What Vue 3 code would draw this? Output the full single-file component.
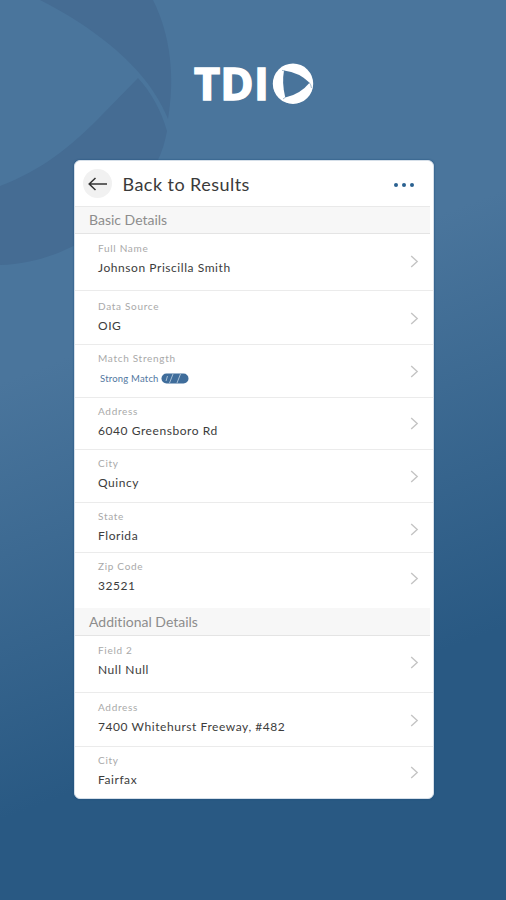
<script setup>
const basic = [
  { label: 'Full Name', value: 'Johnson Priscilla Smith', h: 57, top: 7 },
  { label: 'Data Source', value: 'OIG', h: 54, top: 7.5 },
  { label: 'Match Strength', value: 'Strong Match', h: 53, top: 6, match: true },
  { label: 'Address', value: '6040 Greensboro Rd', h: 52, top: 5.5 },
  { label: 'City', value: 'Quincy', h: 53, top: 6 },
  { label: 'State', value: 'Florida', h: 50, top: 6 },
  { label: 'Zip Code', value: '32521', h: 55, top: 5.5 },
]
const additional = [
  { label: 'Field 2', value: 'Null Null', h: 57, top: 6.5 },
  { label: 'Address', value: '7400 Whitehurst Freeway, #482', h: 54, top: 7 },
  { label: 'City', value: 'Fairfax', h: 51, top: 5.5 },
]
const sections = [
  { title: 'Basic Details', rows: basic },
  { title: 'Additional Details', rows: additional },
]
</script>

<template>
  <div class="screen">
    <svg class="backdrop" width="180" height="270" viewBox="0 0 180 270">
      <path d="M40 0C82 21 118 48 140 74C152 88 161 102 168 119C175 78 171 36 153 0Z" />
      <path d="M138 78C151 92 161 110 167 131C165 142 162 152 157 162C127 222 66 263 0 265V186C42 170 70 147 98 119Z" />
    </svg>
    <div class="logo">
      <span class="logo-text">TDI</span>
      <svg class="logo-mark" width="42" height="42" viewBox="0 0 42 42">
        <circle cx="21" cy="21.7" r="20.2" fill="#fff" />
        <path d="M12 8.6Q27 10.5 37.6 20.8Q28 32.5 13.2 35.6Q9.7 21 12 8.6Z" fill="#49749b" />
        <path d="M10 8.4L12.5 8.8M13.2 35.4L11 37M37 20.5Q39 22 39.5 26" stroke="#8daac3" stroke-width=".8" fill="none" />
      </svg>
    </div>
    <main class="card">
      <header class="head">
        <button class="back" aria-label="Back">
          <svg width="20" height="14" viewBox="0 0 20 14"><path d="M7.5 1L1.2 7L7.5 13M1.2 7H19" /></svg>
        </button>
        <h1>Back to Results</h1>
        <div class="dots"><i></i><i></i><i></i></div>
      </header>
      <section v-for="s in sections" :key="s.title">
        <h2>{{ s.title }}</h2>
        <div v-for="r in s.rows" :key="r.label" class="row" :style="{ height: r.h + 'px', paddingTop: r.top + 'px' }">
          <div class="field">
            <span class="label">{{ r.label }}</span>
            <span class="value" :class="{ match: r.match }">{{ r.value }}
              <svg v-if="r.match" class="pill" width="28" height="11" viewBox="0 0 28 11">
                <rect x=".5" y=".5" width="27" height="10" rx="5" fill="#3f6d9b" />
                <path d="M6.5 3L5 8M12 1L8.5 10M19.5 1L16 10" stroke="#a9c0d5" stroke-width="1" />
              </svg>
            </span>
          </div>
          <svg class="chev" width="9" height="13" viewBox="0 0 9 13"><path d="M1.2 1L7.2 6.5L1.2 12" /></svg>
        </div>
      </section>
    </main>
  </div>
</template>

<style>
body { margin: 0; }
</style>

<style scoped>
.screen {
  position: relative;
  box-sizing: border-box;
  width: 506px;
  height: 900px;
  overflow: hidden;
  padding: 62px 0 0 74px;
  background: linear-gradient(159deg, #4a759c 0%, #4a759c 35%, #295983 75%, #295983 100%);
  font-family: Lato, "Open Sans", sans-serif;
  font-variant-ligatures: none;
}
.backdrop { position: absolute; left: 0; top: 0; fill: #456c93; }
.logo {
  position: relative;
  display: flex;
  height: 98px;
  padding-left: 120px;
}
.logo-text {
  width: 78px;
  font: 700 45px/42px "Open Sans", sans-serif;
  letter-spacing: 0.3px;
  color: #fff;
  -webkit-text-stroke: 1.5px #fff;
}
.card {
  position: relative;
  box-sizing: border-box;
  width: 360px;
  height: 639px;
  background: #fff;
  border: 1px solid #d5dfe9;
  border-radius: 6px;
  overflow: hidden;
  box-shadow: 0 0 2px #1e4d7a;
}
.head { display: flex; align-items: center; height: 45px; padding: 0 19px 0 8px; }
.back {
  width: 29px;
  height: 29px;
  border: 0;
  border-radius: 50%;
  background: #f1f1f1;
  padding: 0 0 0 1px;
  display: grid;
  place-items: center;
}
.back path { fill: none; stroke: #333; stroke-width: 1.5; }
h1 {
  flex: 1;
  margin: 0 0 0 10.5px;
  font-size: 18px;
  font-weight: 400;
  line-height: 24px;
  letter-spacing: 0.45px;
  color: #3a3a3a;
  white-space: nowrap;
}
.dots { display: flex; gap: 4px; margin-top: 3px; }
.dots i { width: 4px; height: 4px; border-radius: 50%; background: #2a6190; }
h2 {
  box-sizing: border-box;
  height: 28px;
  margin: 0 3px 0 0;
  padding-left: 14px;
  border-top: 1px solid #e9e9e9;
  border-bottom: 1px solid #e4e4e4;
  background: #f7f7f7;
  font-size: 14px;
  font-weight: 400;
  line-height: 26px;
  color: #8d8d8d;
}
section + section h2 { border-top-color: #f7f7f7; }
.row {
  box-sizing: border-box;
  display: flex;
  justify-content: space-between;
  border-bottom: 1px solid #ebebeb;
  padding: 7px 14px 0 23px;
}
.row:last-child { border-bottom: 0; }
.field { display: flex; flex-direction: column; }
.label { height: 14px; line-height: 14px; font-size: 10px; letter-spacing: 0.7px; color: #a9a9a9; }
.value { display: flex; align-items: center; height: 16px; margin-top: 4.9px; font-size: 12px; letter-spacing: 0.56px; color: #3c3c3c; white-space: nowrap; }
.value.match { margin-top: 6px; padding-left: 2px; height: 14px; font-size: 9.5px; letter-spacing: 0.2px; color: #52779f; }
.pill { margin-left: 2px; }
.chev { margin-top: 13.5px; fill: none; stroke: #c4c4c4; stroke-width: 1.4; }
</style>
